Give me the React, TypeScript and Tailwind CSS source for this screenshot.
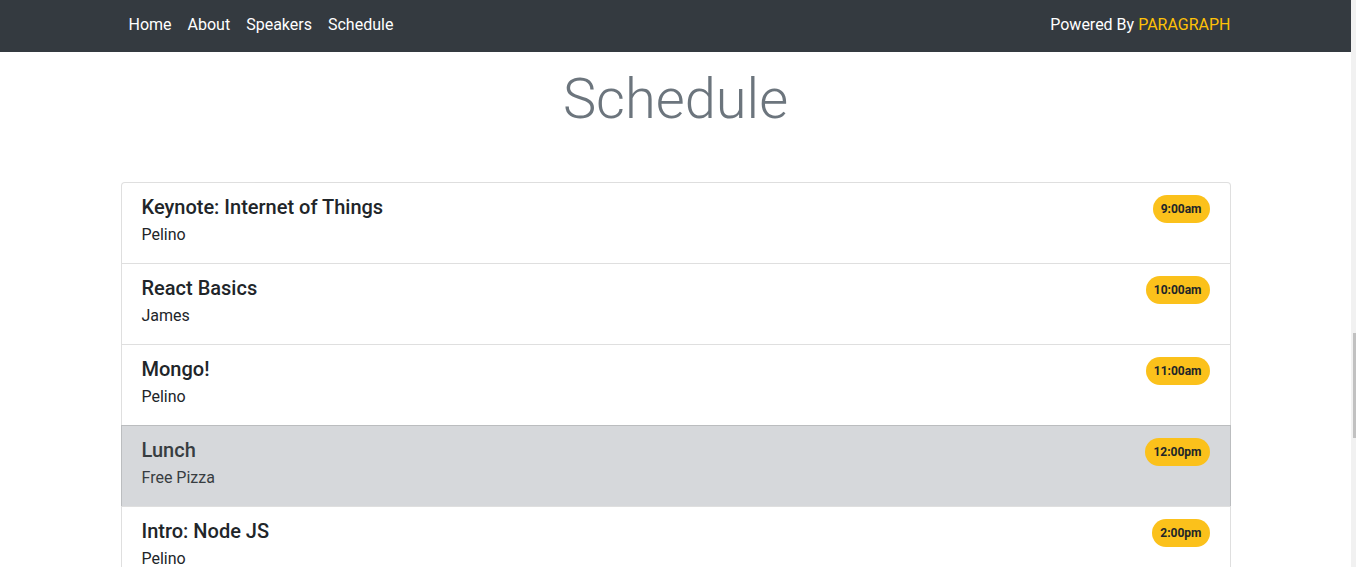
import React from "react";

type Item = { title: string; who: string; time: string; muted?: boolean };

const items: Item[] = [
  { title: "Keynote: Internet of Things", who: "Pelino", time: "9:00am" },
  { title: "React Basics", who: "James", time: "10:00am" },
  { title: "Mongo!", who: "Pelino", time: "11:00am" },
  { title: "Lunch", who: "Free Pizza", time: "12:00pm", muted: true },
  { title: "Intro: Node JS", who: "Pelino", time: "2:00pm" },
  { title: "Advanced Express", who: "James", time: "3:00pm" },
];

export default function App() {
  return (
    <div className="flex h-[567px] w-[1356px] overflow-hidden bg-white font-['Roboto',sans-serif] text-[#212529]">
      <div className="flex w-[1351px] shrink-0 flex-col">
        <nav className="h-[52px] shrink-0 bg-[#343a40]">
          <div className="mx-auto flex h-full w-[1110px] items-center justify-between pb-[2px] text-[16px] leading-6 text-white">
            <ul className="flex">
              <li className="px-2">Home</li>
              <li className="px-2">About</li>
              <li className="px-2">Speakers</li>
              <li className="px-2">Schedule</li>
            </ul>
            <div>
              Powered By <span className="text-[#ffc107]">PARAGRAPH</span>
            </div>
          </div>
        </nav>
        <main className="mx-auto w-[1110px]">
          <h1 className="mt-[14px] text-center text-[56px] font-light leading-[1.2] text-[#6c757d]">
            Schedule
          </h1>
          <ul className="mt-[49px] rounded-t-[4px]">
            {items.map((it, i) => (
              <li
                key={i}
                className={`border-x border-t border-black/[0.125] px-5 py-3 ${i === 0 ? "rounded-t-[4px]" : ""} ${
                  it.muted ? "bg-[#d6d8db] text-[#383d41]" : "bg-white"
                }`}
              >
                <div className="flex items-start justify-between">
                  <h5 className="mb-1 text-[20px] font-medium leading-[1.2]">{it.title}</h5>
                  <span className="flex h-7 items-center rounded-full bg-[#fbc11b] px-2 text-[12px] font-bold leading-none text-[#212529]">
                    {it.time}
                  </span>
                </div>
                <p className="mb-1 text-[16px] leading-6">{it.who}</p>
              </li>
            ))}
          </ul>
        </main>
      </div>
      <div className="relative w-[5px] shrink-0 bg-[#f1f1f1]">
        <div className="absolute left-[2px] right-0 top-[333px] h-[105px] bg-[#c1c1c1]" />
      </div>
    </div>
  );
}
